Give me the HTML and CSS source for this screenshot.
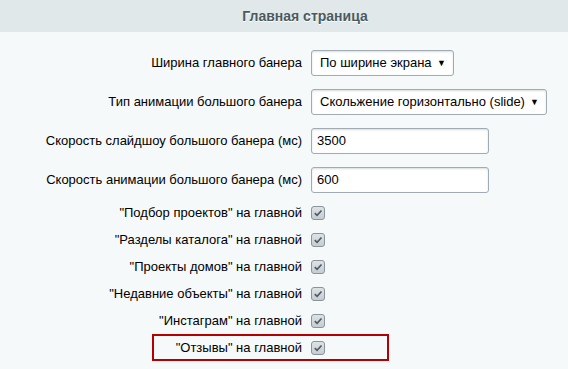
FILE: index.html
```html
<!DOCTYPE html>
<html lang="ru">
<head>
    <meta charset="UTF-8">
    <title>Главная страница</title>
    <link rel="stylesheet" href="styles.css">
</head>
<body>
    <div class="section-title">Главная страница</div>

    <div class="form">
        <div class="row row-field">
            <label class="cell-l">Ширина главного банера</label>
            <div class="cell-r">
                <div class="select select-narrow">
                    <span class="select-value">По ширине экрана</span>
                    <span class="select-arrow">&#9660;</span>
                </div>
            </div>
        </div>

        <div class="row row-field">
            <label class="cell-l">Тип анимации большого банера</label>
            <div class="cell-r">
                <div class="select select-wide">
                    <span class="select-value">Скольжение горизонтально (slide)</span>
                    <span class="select-arrow">&#9660;</span>
                </div>
            </div>
        </div>

        <div class="row row-field">
            <label class="cell-l">Скорость слайдшоу большого банера (мс)</label>
            <div class="cell-r">
                <input class="text-input" type="text" value="3500">
            </div>
        </div>

        <div class="row row-field">
            <label class="cell-l">Скорость анимации большого банера (мс)</label>
            <div class="cell-r">
                <input class="text-input" type="text" value="600">
            </div>
        </div>

        <div class="row row-check">
            <label class="cell-l">"Подбор проектов" на главной</label>
            <div class="cell-r"><span class="checkbox"><svg viewBox="0 0 13 13"><path d="M3 6.6 L5.5 9 L10.3 3.8" /></svg></span></div>
        </div>

        <div class="row row-check">
            <label class="cell-l">"Разделы каталога" на главной</label>
            <div class="cell-r"><span class="checkbox"><svg viewBox="0 0 13 13"><path d="M3 6.6 L5.5 9 L10.3 3.8" /></svg></span></div>
        </div>

        <div class="row row-check">
            <label class="cell-l">"Проекты домов" на главной</label>
            <div class="cell-r"><span class="checkbox"><svg viewBox="0 0 13 13"><path d="M3 6.6 L5.5 9 L10.3 3.8" /></svg></span></div>
        </div>

        <div class="row row-check">
            <label class="cell-l">"Недавние объекты" на главной</label>
            <div class="cell-r"><span class="checkbox"><svg viewBox="0 0 13 13"><path d="M3 6.6 L5.5 9 L10.3 3.8" /></svg></span></div>
        </div>

        <div class="row row-check">
            <label class="cell-l">"Инстаграм" на главной</label>
            <div class="cell-r"><span class="checkbox"><svg viewBox="0 0 13 13"><path d="M3 6.6 L5.5 9 L10.3 3.8" /></svg></span></div>
        </div>

        <div class="row row-check row-marked">
            <label class="cell-l">"Отзывы" на главной</label>
            <div class="cell-r"><span class="checkbox"><svg viewBox="0 0 13 13"><path d="M3 6.6 L5.5 9 L10.3 3.8" /></svg></span></div>
            <span class="highlight"></span>
        </div>
    </div>
</body>
</html>
```

FILE: styles.css
```css
body {
    margin: 0;
    background: #f5f9f9;
    font-family: "Liberation Sans", Arial, sans-serif;
    font-size: 13px;
    color: #000;
    overflow: hidden;
}

.section-title {
    height: 32px;
    line-height: 32px;
    background: #e0e8ea;
    padding-left: 42px;
    text-align: center;
    font-size: 14px;
    font-weight: bold;
    color: #4b5a60;
    text-shadow: 0 1px 0 #fff;
}

.form {
    padding-top: 11px;
}

.row {
    display: grid;
    grid-template-columns: 311px 1fr;
    align-items: center;
}

.row-field {
    height: 39px;
}

.row-check {
    height: 27px;
}

.cell-l {
    text-align: right;
    padding-right: 9px;
    white-space: nowrap;
}

.cell-r {
    display: flex;
    align-items: center;
}

.select {
    box-sizing: border-box;
    height: 26px;
    display: flex;
    align-items: center;
    justify-content: space-between;
    padding: 0 7px 0 8px;
    background: #fff;
    border: 1px solid #a3abb2;
    border-radius: 3px;
    box-shadow: inset 0 1px 2px rgba(180, 188, 191, 0.5);
    color: #000;
}

.select-narrow {
    width: 143px;
}

.select-wide {
    width: 236px;
}

.select-arrow {
    font-size: 9px;
    color: #000;
}

.text-input {
    box-sizing: border-box;
    width: 178px;
    height: 26px;
    margin: 0;
    padding: 0 5px;
    background: #fff;
    border: 1px solid #a3abb2;
    border-radius: 3px;
    box-shadow: inset 0 1px 2px rgba(180, 188, 191, 0.5);
    font-family: inherit;
    font-size: 13px;
    color: #000;
}

.checkbox {
    box-sizing: border-box;
    width: 14px;
    height: 14px;
    border: 1px solid #8b949a;
    border-radius: 3px;
    background: linear-gradient(#dde2e5, #c6cdd1);
    display: flex;
}

.checkbox svg {
    width: 12px;
    height: 12px;
}

.checkbox path {
    fill: none;
    stroke: #4f585e;
    stroke-width: 1.7;
}

.row-marked {
    position: relative;
}

/* red frame drawn over the last row */
.highlight {
    position: absolute;
    left: 152px;
    top: 0;
    width: 237px;
    height: 27px;
    box-sizing: border-box;
    border: 2px solid #b30000;
}
```
